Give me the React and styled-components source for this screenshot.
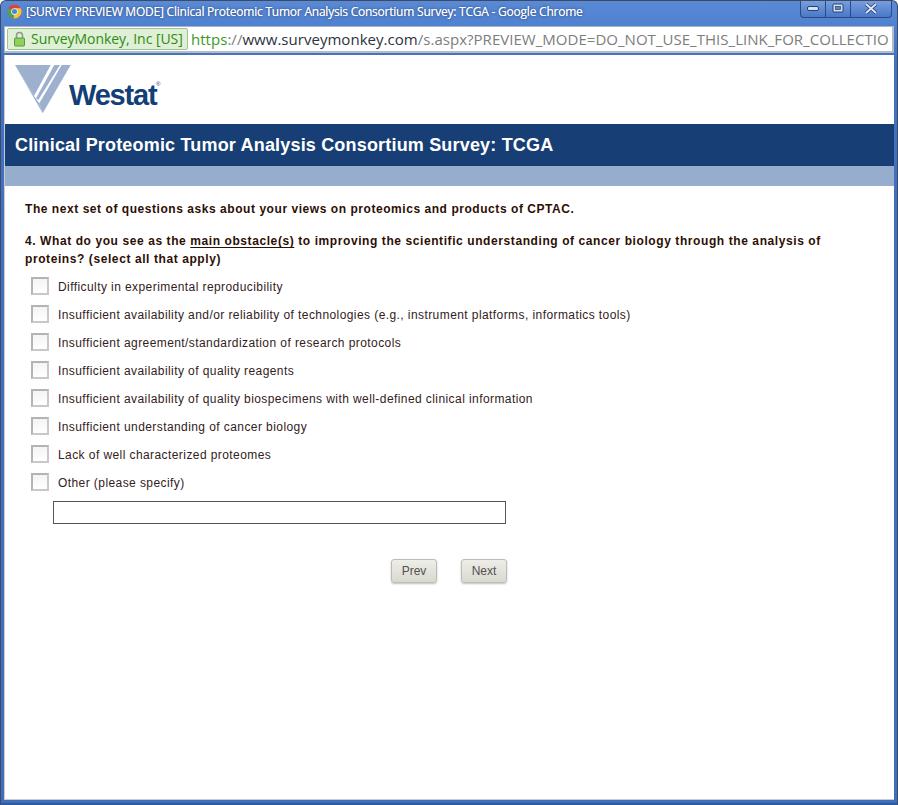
import React from 'react';
import styled, { createGlobalStyle } from 'styled-components';

const Global = createGlobalStyle`
  html, body { margin: 0; padding: 0; background: #fff; }
  * { box-sizing: border-box; }
`;

const Frame = styled.div`
  width: 898px; height: 805px; display: flex; flex-direction: column; overflow: hidden;
  background: linear-gradient(#5a8ad6 0, #4d7fcd 30px, #4272c0 56px, #3f6fb9 100%);
  border: 1px solid #3c4a63; border-radius: 6px 6px 0 0;
  border-bottom: 2px solid #2f5a9d;
  padding: 0 3px 3px 3px;
`;
const TitleBar = styled.div`
  height: 25px; flex: none; display: flex; align-items: flex-start; position: relative;
`;
const Favicon = styled.svg`
  width: 15px; height: 15px; margin: 3px 0 0 3px; flex: none;
`;
const Title = styled.div`
  margin: 2px 0 0 4px; font: 12px/17px "Open Sans", sans-serif; color: #fff; letter-spacing: -0.225px;
  white-space: nowrap; text-shadow: 0 0 3px rgba(20,40,90,.8), 0 0 .5px #fff;
`;
const WinButtons = styled.div`
  position: absolute; right: 2px; top: -1px; width: 92px; height: 18px; display: flex;
  border: 1px solid #2c4a86; border-top: none; border-radius: 0 0 4px 4px;
  background: linear-gradient(#7aa0e0, #4a78c6);
`;
const WinButton = styled.div`
  flex: ${p => p.$grow || 1}; display: flex; align-items: center; justify-content: center;
  & + & { border-left: 1px solid #2c4a86; }
  svg { display: block; }
`;
const Toolbar = styled.div`
  height: 27px; flex: none; margin: 0 0 2px 0; padding: 2px 3px 2px 2px;
  background: #fff; border: 1px solid #a9b4c8; border-right: 2px solid #b6bcc6; border-bottom: 2px solid #b6bcc6;
  display: flex; align-items: center; white-space: nowrap; overflow: hidden;
  font: 15px/20px "Open Sans", sans-serif;
`;
const EvBadge = styled.div`
  flex: none; height: 22px; width: 181px; display: flex; align-items: center; gap: 5px; padding-left: 5px;
  background: #dff0d6; border: 1px solid #9fc48f; border-radius: 2px; color: #2e8b12;
  font-size: 14px; letter-spacing: -0.05px;
`;
const Url = styled.div`
  margin-left: 3px; color: #7d7d7d; overflow: hidden; flex: 1; white-space: nowrap; font-size: 15px; letter-spacing: 0.03px;
  span.s { color: #3a9a1a; } span.h { color: #2c3340; }
`;
const Page = styled.div`
  flex: 1; background: #fff; border-left: 1px solid #c8ccd2; border-bottom: 1px solid #c8ccd2;
  display: flex; flex-direction: column; font-family: "Liberation Sans", Arial, sans-serif;
`;
const LogoRow = styled.div`
  height: 69px; flex: none; display: flex; padding: 10px 0 0 10px; position: relative;
`;
const LogoMark = styled.svg`
  width: 58px; height: 50px; flex: none;
`;
const LogoText = styled.div`
  margin: 12px 0 0 -4px; font: bold 29px/36px "Liberation Sans", Arial, sans-serif; color: #123f76; letter-spacing: -1.2px;
  position: relative;
  sup { position: absolute; right: -4px; top: 4px; font: 6px/6px "Liberation Sans", sans-serif; letter-spacing: 0; }
`;
const Banner = styled.div`
  height: 42px; flex: none; background: #173f75; color: #fff; padding-left: 10px;
  font: bold 18px/42px "Liberation Sans", Arial, sans-serif; letter-spacing: 0.18px;
`;
const SubBanner = styled.div`
  height: 20px; flex: none; background: #97adcd;
`;
const Content = styled.div`
  padding: 16px 0 0 20px; color: #2c1108; font-size: 12px;
`;
const Intro = styled.div`
  font: bold 12px/15px "Liberation Sans", Arial, sans-serif; letter-spacing: 0.55px; color: #2c0f05;
`;
const Question = styled.div`
  margin-top: 15px; width: 810px; font: bold 12px/18px "Liberation Sans", Arial, sans-serif; letter-spacing: 0.585px; color: #2c0f05;
  u { text-underline-offset: 2px; }
`;
const Options = styled.div`
  margin: 4px 0 0 6px; display: flex; flex-direction: column;
`;
const Option = styled.label`
  height: 28px; display: flex; align-items: center; gap: 9px; font: 12px/16px "Liberation Sans", Arial, sans-serif; letter-spacing: 0.42px; color: #33211c;
`;
const OptionText = styled.span`
  padding-top: 2px;
`;
const Box = styled.span`
  width: 18px; height: 18px; flex: none; background: linear-gradient(#f4f4f4, #fff); border: 2px solid #b4b4b4; border-right-color: #c8c8c8; border-bottom-color: #c8c8c8;
`;
const OtherInput = styled.div`
  margin: 5px 0 0 28px; width: 453px; height: 23px; border: 1px solid #555; background: #fff;
`;
const Actions = styled.div`
  margin: 35px 0 0 366px; display: flex; gap: 24px;
`;
const Btn = styled.div`
  width: 46px; height: 24px; border: 1px solid #bdbdb5; border-radius: 3px;
  background: linear-gradient(#eeeee8, #d9d9d0); box-shadow: 0 1px 2px rgba(0,0,0,.25);
  text-align: center; font: 12px/22px "Liberation Sans", Arial, sans-serif; color: #55504f;
`;

const options = [
  'Difficulty in experimental reproducibility',
  'Insufficient availability and/or reliability of technologies (e.g., instrument platforms, informatics tools)',
  'Insufficient agreement/standardization of research protocols',
  'Insufficient availability of quality reagents',
  'Insufficient availability of quality biospecimens with well-defined clinical information',
  'Insufficient understanding of cancer biology',
  'Lack of well characterized proteomes',
  'Other (please specify)',
];

const ChromeIcon = () => (
  <Favicon viewBox="0 0 16 16">
    <circle cx="8" cy="8" r="7.5" fill="#d8453a" />
    <path d="M8 8 L1.5 4.2 A7.5 7.5 0 0 0 7 15.4 Z" fill="#4aa64a" />
    <path d="M8 8 L7 15.4 A7.5 7.5 0 0 0 14.6 4.5 L8 4.5 Z" fill="#f2c531" />
    <circle cx="8" cy="8" r="3.6" fill="#e9eef8" />
    <circle cx="8" cy="8" r="2.7" fill="#4a86d8" />
  </Favicon>
);

const Lock = () => (
  <svg width="13" height="16" viewBox="0 0 13 16" style={{ flex: 'none' }}>
    <path d="M3.5 7 V4.5 a3 3 0 0 1 6 0 V7" fill="none" stroke="#8f9a8c" strokeWidth="1.6" />
    <rect x="1.5" y="7" width="10" height="8" rx="1" fill="#8fd05f" stroke="#5b9a3a" />
  </svg>
);

export default function App() {
  return (
    <>
      <Global />
      <Frame>
        <TitleBar>
          <ChromeIcon />
          <Title>[SURVEY PREVIEW MODE] Clinical Proteomic Tumor Analysis Consortium Survey: TCGA - Google Chrome</Title>
          <WinButtons>
            <WinButton $grow={25}>
              <svg width="12" height="6"><rect x="0.5" y="0.5" width="11" height="4" rx="1.5" fill="#d5e0f3" stroke="#24406f" /></svg>
            </WinButton>
            <WinButton $grow={24}>
              <svg width="13" height="11"><rect x="1" y="1" width="10" height="8" rx="1" fill="#d5e0f3" stroke="#24406f" /><rect x="3.5" y="3.5" width="5" height="3" fill="#5c86c9" stroke="#24406f" strokeWidth=".7" /></svg>
            </WinButton>
            <WinButton $grow={41}>
              <svg width="14" height="11"><path d="M2 1 L12 10 M12 1 L2 10" stroke="#24406f" strokeWidth="3.4" /><path d="M2 1 L12 10 M12 1 L2 10" stroke="#e2e9f6" strokeWidth="1.8" /></svg>
            </WinButton>
          </WinButtons>
        </TitleBar>
        <Toolbar>
          <EvBadge><Lock />SurveyMonkey, Inc [US]</EvBadge>
          <Url><span className="s">https</span>://<span className="h">www.surveymonkey.com</span>/s.aspx?PREVIEW_MODE=DO_NOT_USE_THIS_LINK_FOR_COLLECTION</Url>
        </Toolbar>
        <Page>
          <LogoRow>
            <LogoMark viewBox="0 0 58 50">
              <path d="M0 0 H35.7 L19 31 Z" fill="#9db1cf" />
              <path d="M39.3 0 H45 L23.3 35 L21 33.3 Z" fill="#9db1cf" />
              <path d="M46.7 0 H55.7 L27.7 48.3 L24.3 38.3 Z" fill="#9db1cf" />
              <path d="M0 0 L27.7 48.3 L24.3 38.3 L19 31 Z" fill="#9db1cf" />
            </LogoMark>
            <LogoText>Westat<sup>®</sup></LogoText>
          </LogoRow>
          <Banner>Clinical Proteomic Tumor Analysis Consortium Survey: TCGA</Banner>
          <SubBanner />
          <Content>
            <Intro>The next set of questions asks about your views on proteomics and products of CPTAC.</Intro>
            <Question>
              4. What do you see as the <u>main obstacle(s)</u> to improving the scientific understanding of cancer biology through the analysis of proteins? (select all that apply)
            </Question>
            <Options>
              {options.map(o => <Option key={o}><Box /><OptionText>{o}</OptionText></Option>)}
            </Options>
            <OtherInput />
            <Actions><Btn>Prev</Btn><Btn>Next</Btn></Actions>
          </Content>
        </Page>
      </Frame>
    </>
  );
}
